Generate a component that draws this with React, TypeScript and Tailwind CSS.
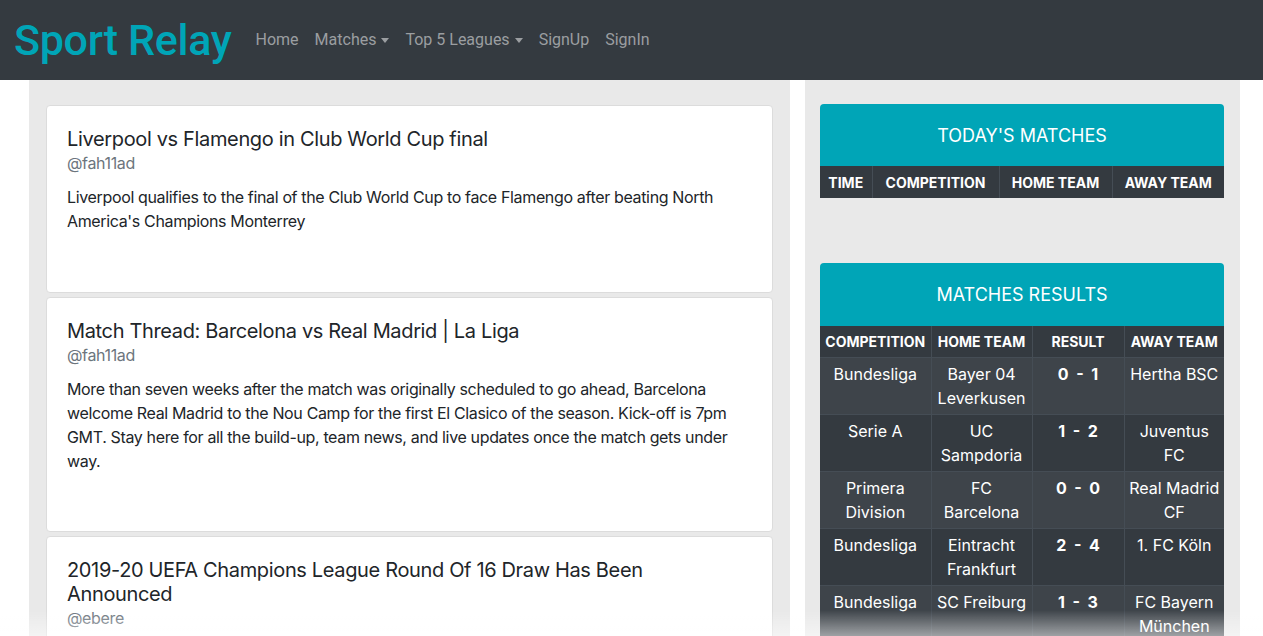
import React from "react";

const articles = [
  {
    title: "Liverpool vs Flamengo in Club World Cup final",
    author: "@fah11ad",
    body: "Liverpool qualifies to the final of the Club World Cup to face Flamengo after beating North America's Champions Monterrey",
  },
  {
    title: "Match Thread: Barcelona vs Real Madrid | La Liga",
    author: "@fah11ad",
    body: "More than seven weeks after the match was originally scheduled to go ahead, Barcelona welcome Real Madrid to the Nou Camp for the first El Clasico of the season. Kick-off is 7pm GMT. Stay here for all the build-up, team news, and live updates once the match gets under way.",
  },
  {
    title: "2019-20 UEFA Champions League Round Of 16 Draw Has Been Announced",
    author: "@ebere",
    body: "The draw for the Round of 16 of the UEFA Champions League has been made in Nyon, Switzerland.",
  },
];

const results = [
  ["Bundesliga", "Bayer 04 Leverkusen", "0 - 1", "Hertha BSC"],
  ["Serie A", "UC Sampdoria", "1 - 2", "Juventus FC"],
  ["Primera Division", "FC Barcelona", "0 - 0", "Real Madrid CF"],
  ["Bundesliga", "Eintracht Frankfurt", "2 - 4", "1. FC Köln"],
  ["Bundesliga", "SC Freiburg", "1 - 3", "FC Bayern München"],
];

function Caret() {
  return (
    <span className="ml-[5px] inline-block h-0 w-0 border-x-[4px] border-t-[5px] border-x-transparent border-t-current align-[3px]" />
  );
}

export default function App() {
  return (
    <div className="min-h-screen bg-white" style={{ fontFamily: "Inter, 'Noto Sans', sans-serif" }}>
      <nav className="flex h-[80px] items-center bg-[#343a40] pl-[14px]" style={{ fontFamily: "Roboto, sans-serif" }}>
        <span className="text-[43px] font-medium leading-none tracking-[-0.3px] text-[#00a5b7]">Sport Relay</span>
        <div className="ml-[24px] flex items-center gap-[16px] text-[16px] text-[#9b9ea1]">
          <span>Home</span>
          <span className="flex items-center">Matches<Caret /></span>
          <span className="flex items-center">Top 5 Leagues<Caret /></span>
          <span>SignUp</span>
          <span>SignIn</span>
        </div>
      </nav>

      <div className="flex pl-[29px]">
        <div className="flex w-[761px] flex-col gap-[4px] bg-[#e9e9e9] px-[17px] pt-[25px] tracking-[-0.35px]">
          {articles.map((a, i) => (
            <div
              key={i}
              className={`rounded-[4px] border border-[#dcdcdc] bg-white px-[20px] pt-[21px] ${i === 0 ? "h-[188px]" : i === 1 ? "h-[235px]" : "h-[240px]"}`}
            >
              <h5 className="text-[20px] leading-[24px] text-[#212529]">{a.title}</h5>
              <div className="text-[16px] leading-[24px] text-[#6c757d]">{a.author}</div>
              <p className="mt-[10px] text-[16px] leading-[24px] text-[#212529]">{a.body}</p>
            </div>
          ))}
        </div>

        <div className="ml-[15px] w-[435px] bg-[#e9e9e9] pl-[15px] pr-[16px] pt-[24px]">
          <div className="flex h-[62px] items-center justify-center rounded-t-[4px] bg-[#00a5b7] text-[18px] text-white">
            TODAY'S MATCHES
          </div>
          <table className="w-full border-collapse bg-[#343a40] text-white">
            <thead>
              <tr className="h-[32px] text-[14px] font-bold">
                <th className="w-[52px] border-r border-[#454d55] px-[5px]">TIME</th>
                <th className="w-[127px] border-r border-[#454d55] px-[5px]">COMPETITION</th>
                <th className="w-[113px] border-r border-[#454d55] px-[5px]">HOME TEAM</th>
                <th className="px-[5px]">AWAY TEAM</th>
              </tr>
            </thead>
          </table>

          <div className="mt-[65px] flex h-[63px] items-center justify-center rounded-t-[4px] bg-[#00a5b7] text-[18px] text-white">
            MATCHES RESULTS
          </div>
          <table className="w-full table-fixed border-collapse bg-[#343a40] text-white">
            <thead>
              <tr className="h-[31px] text-[14px] font-bold">
                <th className="w-[111px] border-r border-[#454d55] px-[4px]">COMPETITION</th>
                <th className="w-[101px] border-r border-[#454d55] px-[4px]">HOME TEAM</th>
                <th className="w-[92px] border-r border-[#454d55] px-[4px]">RESULT</th>
                <th className="px-[4px]">AWAY TEAM</th>
              </tr>
            </thead>
            <tbody>
              {results.map((r, i) => (
                <tr key={i} className={`h-[57px] border-t border-[#454d55] align-top text-[16px] leading-[24px] ${i % 2 === 0 ? "bg-[#3e444a]" : "bg-[#343a40]"}`}>
                  <td className="border-r border-[#454d55] px-[4px] py-[4px] text-center">{r[0]}</td>
                  <td className="border-r border-[#454d55] px-[4px] py-[4px] text-center">{r[1]}</td>
                  <td className="border-r border-[#454d55] px-[4px] py-[4px] text-center font-bold whitespace-pre">{r[2].replace(" - ", "  -  ")}</td>
                  <td className="px-[4px] py-[4px] text-center">{r[3]}</td>
                </tr>
              ))}
            </tbody>
          </table>
        </div>
      </div>

      <div className="pointer-events-none fixed bottom-0 left-0 right-0 h-[26px] bg-linear-to-b from-transparent to-white/50" />
    </div>
  );
}
